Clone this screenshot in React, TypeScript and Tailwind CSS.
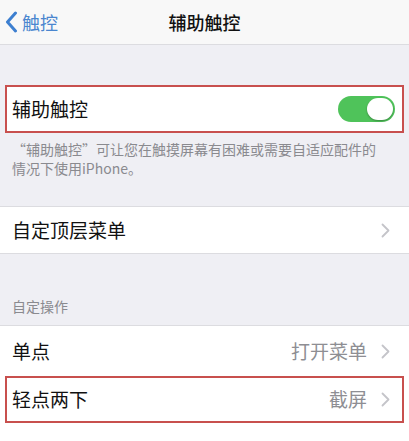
import React from "react"

const font = { fontFamily: '"Noto Sans CJK SC", "Noto Sans", sans-serif' }

function Chevron() {
  return (
    <svg width="9" height="15" viewBox="0 0 9 15" fill="none" className="shrink-0">
      <path d="M1.5 1.5 L7.5 7.5 L1.5 13.5" stroke="#c4c4c9" strokeWidth="1.8" strokeLinecap="round" strokeLinejoin="round" />
    </svg>
  )
}

function Toggle() {
  return (
    <div className="flex h-[26px] w-[57px] items-center justify-end rounded-full bg-[#4fc35a] p-[2px]">
      <div className="h-[22px] w-[26px] rounded-full bg-white shadow-[0_1px_2px_rgba(0,0,0,0.3)]" />
    </div>
  )
}

export default function App() {
  return (
    <div className="h-[441px] w-[409px] overflow-hidden bg-[#efeff4] text-[#111]" style={font}>
      {/* nav bar */}
      <div className="flex h-[45px] items-center justify-between border-b border-[#dcdce0] bg-[#f8f8f8] px-[5px]">
        <div className="flex w-[80px] items-center gap-[4px] text-[18px] text-[#4a86cf]">
          <svg width="13" height="22" viewBox="0 0 13 22" fill="none">
            <path d="M10.5 2 L2.5 11 L10.5 20" stroke="#3d7fd0" strokeWidth="3" strokeLinecap="round" strokeLinejoin="round" />
          </svg>
          <span>触控</span>
        </div>
        <div className="text-[18px] font-medium">辅助触控</div>
        <div className="w-[80px]" />
      </div>

      <div className="h-[40px]" />

      {/* assistive touch toggle */}
      <div className="mx-[5px] flex h-[48px] items-center justify-between border-2 border-[#c8504e] bg-white pl-[5px] pr-[7px]">
        <span className="text-[19px]">辅助触控</span>
        <Toggle />
      </div>

      <div className="px-[12px] pt-[7px] text-[14px] leading-[19px] text-[#8a8a8f]">
        “辅助触控”可让您在触摸屏幕有困难或需要自适应配件的
        <br />
        情况下使用iPhone。
      </div>

      <div className="h-[28px]" />

      {/* top level menu */}
      <div className="flex h-[48px] items-center justify-between border-y border-[#dcdce0] bg-white pl-[12px] pr-[19px]">
        <span className="text-[19px]">自定顶层菜单</span>
        <Chevron />
      </div>

      <div className="flex h-[71px] items-end px-[12px] pb-[8px] text-[14px] text-[#8a8a8f]">自定操作</div>

      {/* custom actions */}
      <div className="border-t border-[#dcdce0] bg-white">
        <div className="flex h-[50px] items-center justify-between pl-[12px] pr-[19px]">
          <span className="text-[19px]">单点</span>
          <div className="flex items-center gap-[14px]">
            <span className="text-[19px] text-[#8e8e93]">打开菜单</span>
            <Chevron />
          </div>
        </div>
        <div className="mx-[5px] flex h-[47px] items-center justify-between border-2 border-[#c8504e] bg-white pl-[5px] pr-[12px]">
          <span className="text-[19px]">轻点两下</span>
          <div className="flex items-center gap-[14px]">
            <span className="text-[19px] text-[#8e8e93]">截屏</span>
            <Chevron />
          </div>
        </div>
        <div className="h-[30px]" />
      </div>
    </div>
  )
}
